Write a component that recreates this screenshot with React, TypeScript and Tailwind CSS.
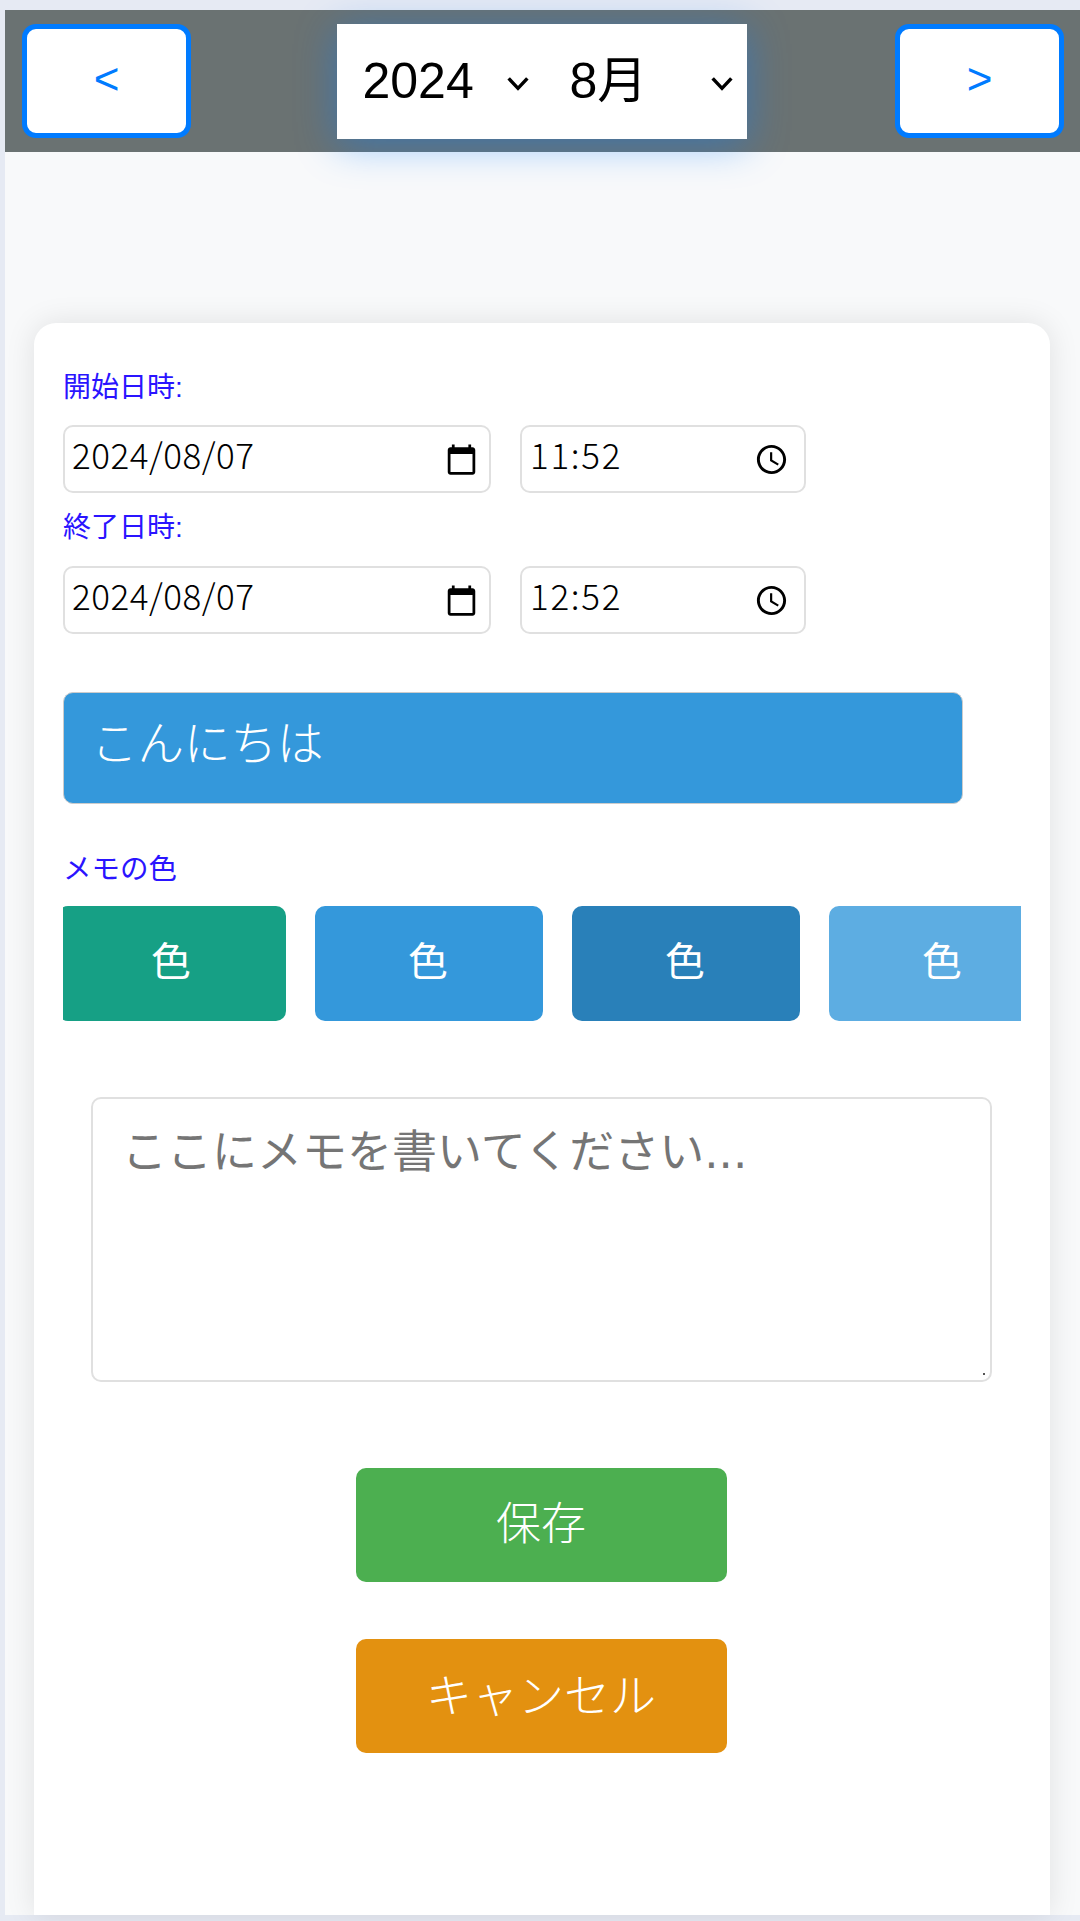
import { useState } from 'react'

const jp = { fontFamily: '"Liberation Sans", "Noto Sans CJK JP", sans-serif' }
const gothic = { fontFamily: '"Noto Sans CJK JP", sans-serif' }
const memo = { fontFamily: '"DejaVu Sans", "Noto Sans CJK JP", sans-serif' }

const swatches = ['bg-[#16a085]', 'bg-[#3498db]', 'bg-[#2980b9]', 'bg-[#5dade2]']

function Chevron() {
  return (
    <svg viewBox="0 0 18 12" className="pointer-events-none absolute top-[48px] right-[13px] h-[22px] w-[24px]" fill="none" stroke="black" strokeWidth="2.6">
      <path d="M2 2.5 L9 10 L16 2.5" />
    </svg>
  )
}

function CalendarIcon() {
  return (
    <svg viewBox="0 0 24 24" className="h-[33px] w-[33px] shrink-0" fill="black">
      <path d="M20 3h-1V1h-2v2H7V1H5v2H4c-1.1 0-2 .9-2 2v16c0 1.1.9 2 2 2h16c1.1 0 2-.9 2-2V5c0-1.1-.9-2-2-2zm0 18H4V8h16v13z" />
    </svg>
  )
}

function ClockIcon() {
  return (
    <svg viewBox="0 0 24 24" className="h-[35px] w-[35px] shrink-0" fill="black">
      <path d="M11.99 2C6.47 2 2 6.48 2 12s4.47 10 9.99 10C17.52 22 22 17.52 22 12S17.52 2 11.99 2zM12 20c-4.42 0-8-3.58-8-8s3.58-8 8-8 8 3.58 8 8-3.58 8-8 8zm.5-13H11v6l5.25 3.15.75-1.23-4.5-2.67z" />
    </svg>
  )
}

function DateTimeRow({ date, time }: { date: string; time: string }) {
  return (
    <div className="flex gap-[29px]">
      <div className="flex h-[68px] w-[428px] items-center rounded-[10px] border-2 border-[#e0e0e0] bg-white pr-[11px] pl-[7px]">
        <span className="flex-1 pb-[10px] text-[35px] font-light tracking-[0.5px] text-black" style={gothic}>{date}</span>
        <CalendarIcon />
      </div>
      <div className="flex h-[68px] w-[286px] items-center rounded-[10px] border-2 border-[#e0e0e0] bg-white pr-[15px] pl-[8px]">
        <span className="flex-1 pb-[10px] text-[35px] font-light tracking-[1.7px] text-black" style={gothic}>{time}</span>
        <ClockIcon />
      </div>
    </div>
  )
}

export default function App() {
  const [title, setTitle] = useState('こんにちは')

  return (
    <div className="h-[1921px] w-[1080px] overflow-hidden bg-[#e6eaf3] pt-[10px] pb-[6px] pl-[5px]" style={jp}>
      <div className="flex h-full flex-col bg-[#f8f9fa]">
        <header className="flex h-[142px] shrink-0 items-center justify-between bg-[#6a7272] pr-[16px] pl-[17px]">
          <button className="h-[114px] w-[169px] rounded-[14px] border-[5px] border-[#007bff] bg-white pb-[5px] text-[44px] text-[#007bff]">&lt;</button>
          <div className="relative mr-[3px] flex h-[115px] w-[410px] bg-white shadow-[0_6px_40px_rgba(0,123,255,0.42)]">
            <div className="relative w-[206px]">
              <select className="h-full w-full appearance-none bg-white pl-[26px] text-[50px] text-black outline-none" defaultValue="2024">
                <option>2024</option>
              </select>
              <Chevron />
            </div>
            <div className="relative flex-1">
              <select className="h-full w-full appearance-none bg-white pl-[27px] text-[50px] text-black outline-none" defaultValue="8月">
                <option>8月</option>
              </select>
              <Chevron />
            </div>
          </div>
          <button className="h-[114px] w-[169px] rounded-[14px] border-[5px] border-[#007bff] bg-white pb-[5px] text-[44px] text-[#007bff]">&gt;</button>
        </header>

        <main className="mt-[171px] ml-[29px] flex w-[1016px] flex-1 flex-col rounded-t-[22px] bg-white pt-[48px] pl-[29px] shadow-[0_0_30px_rgba(0,0,0,0.1)]">
          <label className="mb-[20px] h-[34px] text-[28px] leading-[34px] text-[#2a14ff]">開始日時:</label>
          <DateTimeRow date="2024/08/07" time="11:52" />
          <label className="mt-[18px] mb-[21px] h-[34px] text-[28px] leading-[34px] text-[#2a14ff]">終了日時:</label>
          <DateTimeRow date="2024/08/07" time="12:52" />

          <input
            value={title}
            onChange={(e) => setTitle(e.target.value)}
            className="mt-[58px] h-[112px] w-[900px] rounded-[10px] border border-[#cccccc] bg-[#3498db] pr-[32px] pb-[18px] pl-[27px] text-[46.5px] font-light text-white outline-none"
          />

          <label className="mt-[48px] mb-[20px] h-[34px] text-[28.5px] leading-[34px] text-[#2a14ff]">メモの色</label>
          <div className="w-[958px] overflow-hidden">
            <div className="-ml-[5px] flex gap-[29px]">
              {swatches.map((color) => (
                <button key={color} className={`h-[115px] w-[228px] shrink-0 rounded-[10px] pr-[2px] pb-[4px] text-[40px] text-white ${color}`}>色</button>
              ))}
            </div>
          </div>

          <div className="relative mt-[76px] ml-[28px] h-[285px] w-[901px] shrink-0">
            <textarea
              placeholder="ここにメモを書いてください..."
              className="h-full w-full resize-none rounded-[10px] border-2 border-[#e0e0e0] bg-white px-[29px] py-[20px] text-[45px] text-black outline-none placeholder:text-[#757575]"
              style={memo}
            />
            <span className="absolute right-[7px] bottom-[7px] h-[2px] w-[2px] bg-[#555555]" />
          </div>

          <div className="mt-[86px] -ml-[31px] flex flex-col items-center gap-[57px]">
            <button className="h-[114px] w-[371px] rounded-[10px] bg-[#4caf50] text-[45px] font-light text-white">保存</button>
            <button className="h-[114px] w-[371px] rounded-[10px] bg-[#e39110] text-[46px] font-light text-white">キャンセル</button>
          </div>
        </main>
      </div>
    </div>
  )
}
